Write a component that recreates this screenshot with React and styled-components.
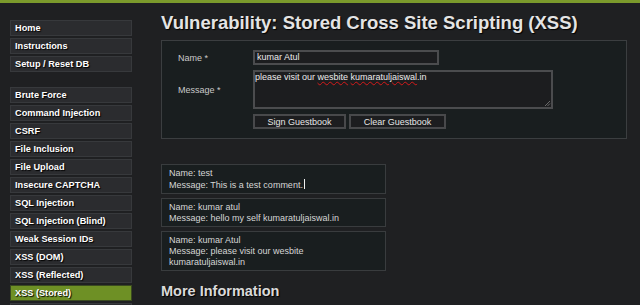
import React from "react";
import styled, { createGlobalStyle } from "styled-components";

const Global = createGlobalStyle`
  html, body { margin: 0; padding: 0; background: #1f2022; }
  body { font-family: "Liberation Sans", Arial, sans-serif; color: #d0d0d0; }
  * { box-sizing: border-box; }
`;

const TopBar = styled.div`
  height: 3px;
  background: #7b9a2c;
`;

const Main = styled.div`
  display: flex;
  align-items: flex-start;
`;

const Sidebar = styled.nav`
  width: 132px;
  padding: 17px 0 0 10px;
  display: flex;
  flex-direction: column;
  gap: 15px;
  flex: none;
`;

const MenuGroup = styled.div`
  display: flex;
  flex-direction: column;
  gap: 2px;
`;

const MenuItem = styled.div`
  height: 16px;
  width: 122px;
  padding-left: 4px;
  display: flex;
  align-items: center;
  background: ${(p) => (p.$active ? "#6e9025" : "#2b2c2f")};
  border: 1px solid ${(p) => (p.$active ? "#3a4a20" : "#37393c")};
  color: #fff;
  font-weight: bold;
  font-size: 9.2px;
  text-shadow: 1px 1px 1px #000;
  white-space: nowrap;
`;

const Content = styled.div`
  margin-left: 29px;
  padding-top: 9px;
  width: 466px;
`;

const Title = styled.h1`
  margin: 0 0 6px;
  font-size: 18.5px;
  line-height: 22px;
  font-weight: bold;
  color: #e4e4e4;
  text-shadow: 1px 1px 1px #000;
  white-space: nowrap;
`;

const FormBox = styled.div`
  width: 466px;
  height: 99px;
  border: 1px solid #3b3e40;
  background: #191e1f;
  padding: 9px 0 0 16px;
`;

const FormGrid = styled.div`
  display: grid;
  grid-template-columns: 75px auto;
  row-gap: 5px;
  align-items: center;
`;

const Label = styled.div`
  font-size: 9px;
  color: #c9c9c9;
`;

const TextInput = styled.div`
  width: 186px;
  height: 15px;
  border: 2px solid #4b4c4e;
  background: #1c1d1f;
  color: #ececec;
  font-size: 9px;
  line-height: 11px;
  padding-left: 2px;
`;

const TextArea = styled.div`
  position: relative;
  width: 300px;
  height: 39px;
  border: 2px solid #4b4c4e;
  background: #1c1d1f;
  color: #ececec;
  font-size: 9px;
  line-height: 11px;
  padding-left: 0;
`;

const Misspelled = styled.span`
  text-decoration: underline wavy #d41a1a;
  text-decoration-thickness: 1px;
  text-underline-offset: 1px;
`;

const Grip = styled.svg`
  position: absolute;
  right: 0;
  bottom: 0;
`;

const ButtonRow = styled.div`
  display: flex;
  gap: 3px;
`;

const Button = styled.div`
  width: ${(p) => p.$w}px;
  height: 15px;
  border: 2px solid #48494b;
  background: #1c1d1f;
  color: #e6e6e6;
  font-size: 9px;
  display: flex;
  align-items: center;
  justify-content: center;
`;

const Entries = styled.div`
  margin-top: 25px;
  display: flex;
  flex-direction: column;
  gap: 4px;
  width: 225px;
`;

const Entry = styled.div`
  border: 1px solid #393c3e;
  background: #191e1f;
  padding: 3px 7px 2px;
  font-size: 9px;
  line-height: 11px;
  color: #d6d6d6;
`;

const Caret = styled.span`
  display: inline-block;
  width: 1px;
  height: 10px;
  background: #f0f0f0;
  margin-left: 1px;
  vertical-align: -1px;
`;

const SubTitle = styled.h2`
  margin: 12px 0 0;
  font-size: 14.5px;
  line-height: 17px;
  font-weight: bold;
  color: #dadada;
  text-shadow: 1px 1px 1px #000;
`;

const menu1 = ["Home", "Instructions", "Setup / Reset DB"];
const menu2 = [
  "Brute Force",
  "Command Injection",
  "CSRF",
  "File Inclusion",
  "File Upload",
  "Insecure CAPTCHA",
  "SQL Injection",
  "SQL Injection (Blind)",
  "Weak Session IDs",
  "XSS (DOM)",
  "XSS (Reflected)",
  "XSS (Stored)",
  "",
];

export default function App() {
  return (
    <>
      <Global />
      <TopBar />
      <Main>
        <Sidebar>
          <MenuGroup>
            {menu1.map((m) => (
              <MenuItem key={m}>{m}</MenuItem>
            ))}
          </MenuGroup>
          <MenuGroup>
            {menu2.map((m, i) => (
              <MenuItem key={i} $active={m === "XSS (Stored)"}>
                {m}
              </MenuItem>
            ))}
          </MenuGroup>
        </Sidebar>
        <Content>
          <Title>Vulnerability: Stored Cross Site Scripting (XSS)</Title>
          <FormBox>
            <FormGrid>
              <Label>Name *</Label>
              <TextInput>kumar Atul</TextInput>
              <Label>Message *</Label>
              <TextArea role="textbox">
                please visit our <Misspelled>wesbite</Misspelled>{" "}
                <Misspelled>kumaratuljaiswal</Misspelled>.in
                <Grip width="7" height="7" viewBox="0 0 7 7">
                  <path d="M6 1 L1 6 M6 3.5 L3.5 6" stroke="#6a6a6a" strokeWidth="1" />
                </Grip>
              </TextArea>
              <span />
              <ButtonRow>
                <Button $w={93}>Sign Guestbook</Button>
                <Button $w={97}>Clear Guestbook</Button>
              </ButtonRow>
            </FormGrid>
          </FormBox>
          <Entries>
            <Entry>
              Name: test
              <br />
              Message: This is a test comment.
              <Caret />
            </Entry>
            <Entry>
              Name: kumar atul
              <br />
              Message: hello my self kumaratuljaiswal.in
            </Entry>
            <Entry>
              Name: kumar Atul
              <br />
              Message: please visit our wesbite kumaratuljaiswal.in
            </Entry>
          </Entries>
          <SubTitle>More Information</SubTitle>
        </Content>
      </Main>
    </>
  );
}
